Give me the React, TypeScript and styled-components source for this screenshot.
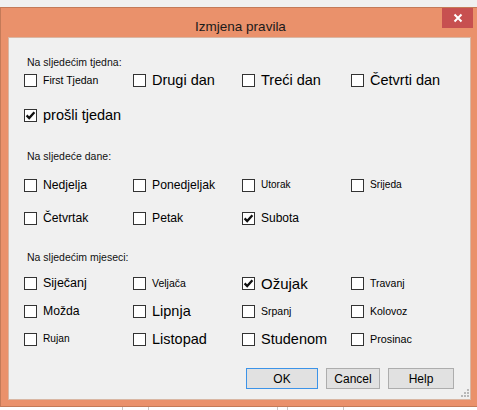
import React from "react";
import styled, { createGlobalStyle } from "styled-components";

const GlobalStyle = createGlobalStyle`
  html, body {
    margin: 0;
    padding: 0;
    background: #f0f0f0;
    overflow: hidden;
  }
  body {
    font-family: "Liberation Sans", Arial, sans-serif;
  }
`;

const Page = styled.div`
  width: 477px;
  height: 410px;
  padding-top: 7px;
  box-sizing: border-box;
  overflow: hidden;
`;

const Window = styled.div`
  width: 478px;
  background: #ea916b;
  border: 1px solid #c47a58;
  box-sizing: border-box;
  padding: 0 6px 6px 7px;
`;

const TitleBar = styled.div`
  height: 29px;
  display: flex;
  align-items: flex-start;
  justify-content: center;
  position: relative;
`;

const Title = styled.div`
  font-size: 13.5px;
  line-height: 16px;
  color: #1a1a1a;
  padding: 11px 0 0 2px;
`;

const CloseButton = styled.div`
  position: absolute;
  top: 0;
  right: -2px;
  width: 31px;
  height: 20px;
  background: #c75050;
  display: flex;
  align-items: center;
  justify-content: center;
`;

const Client = styled.div`
  width: 463px;
  height: 363px;
  background: #f0f0f0;
  box-sizing: border-box;
  border: 1px solid #d9b7a4;
  padding: 17px 0 0 15px;
  display: flex;
  flex-direction: column;
  position: relative;
`;

const Heading = styled.div<{ $gap: number }>`
  margin-top: ${(p) => p.$gap}px;
  height: 14px;
  line-height: 14px;
  font-size: 10.5px;
  color: #111;
  padding-left: 3px;
`;

const Grid = styled.div<{ $gap: number; $top: number }>`
  margin-top: ${(p) => p.$top}px;
  display: grid;
  grid-template-columns: repeat(4, 109px);
  grid-auto-rows: 20px;
  row-gap: ${(p) => p.$gap}px;
`;

const Item = styled.label`
  display: flex;
  align-items: center;
  gap: 6px;
  white-space: nowrap;
`;

const Box = styled.span`
  width: 13px;
  height: 13px;
  box-sizing: border-box;
  border: 1px solid #333;
  background: #fff;
  display: flex;
  align-items: center;
  justify-content: center;
  flex: none;
`;

const Label = styled.span<{ $size: number }>`
  font-size: ${(p) => p.$size}px;
  color: #000;
  line-height: 1;
`;

const Buttons = styled.div`
  margin-top: auto;
  margin-bottom: 10px;
  padding-right: 16px;
  display: flex;
  justify-content: flex-end;
  gap: 8px;
`;

const Button = styled.button<{ $w: number; $primary?: boolean }>`
  width: ${(p) => p.$w}px;
  height: 21px;
  padding: 0;
  border: 1px solid ${(p) => (p.$primary ? "#3c93e8" : "#adadad")};
  background: #e1e1e1;
  font-family: "Liberation Sans", Arial, sans-serif;
  font-size: 12px;
  color: #000;
`;

const Grip = styled.svg`
  position: absolute;
  right: 1px;
  bottom: 2px;
`;

const Below = styled.div`
  height: 3px;
  background: #fff;
  display: flex;
`;

const Cell = styled.div<{ $w: number }>`
  width: ${(p) => p.$w}px;
  border-right: 1px solid #c8c8c8;
  flex: none;
`;

type Opt = { text: string; size: number; checked?: boolean };

const Check = () => (
  <svg width="11" height="11" viewBox="0 0 11 11">
    <path d="M1.6 5.4 L4.2 8.1 L9.4 2.2" fill="none" stroke="#111" strokeWidth="2.3" />
  </svg>
);

const CheckItem = ({ text, size, checked }: Opt) => (
  <Item>
    <Box>{checked && <Check />}</Box>
    <Label $size={size}>{text}</Label>
  </Item>
);

const S = 10.5;
const M = 12.2;
const L = 14.5;

const weeks: Opt[] = [
  { text: "First Tjedan", size: S },
  { text: "Drugi dan", size: L },
  { text: "Treći dan", size: L },
  { text: "Četvrti dan", size: L },
  { text: "prošli tjedan", size: L, checked: true },
];

const days: Opt[] = [
  { text: "Nedjelja", size: M },
  { text: "Ponedjeljak", size: M },
  { text: "Utorak", size: 10 },
  { text: "Srijeda", size: 10.2 },
  { text: "Četvrtak", size: M },
  { text: "Petak", size: M },
  { text: "Subota", size: 12, checked: true },
];

const months: Opt[] = [
  { text: "Siječanj", size: 12.5 },
  { text: "Veljača", size: S },
  { text: "Ožujak", size: 15, checked: true },
  { text: "Travanj", size: S },
  { text: "Možda", size: M },
  { text: "Lipnja", size: L },
  { text: "Srpanj", size: S },
  { text: "Kolovoz", size: S },
  { text: "Rujan", size: 10.2 },
  { text: "Listopad", size: L },
  { text: "Studenom", size: L },
  { text: "Prosinac", size: 10.8 },
];

export default function App() {
  return (
    <>
      <GlobalStyle />
      <Page>
        <Window>
          <TitleBar>
            <Title>Izmjena pravila</Title>
            <CloseButton>
              <svg width="10" height="10" viewBox="0 0 10 10">
                <path d="M1.5 1.5 L8.5 8.5 M8.5 1.5 L1.5 8.5" stroke="#fff" strokeWidth="2" />
              </svg>
            </CloseButton>
          </TitleBar>
          <Client>
            <Heading $gap={0}>Na sljedećim tjedna:</Heading>
            <Grid $top={1} $gap={15}>
              {weeks.map((o) => (
                <CheckItem key={o.text} {...o} />
              ))}
            </Grid>
            <Heading $gap={24}>Na sljedeće dane:</Heading>
            <Grid $top={12} $gap={13}>
              {days.map((o) => (
                <CheckItem key={o.text} {...o} />
              ))}
            </Grid>
            <Heading $gap={22}>Na sljedećim mjeseci:</Heading>
            <Grid $top={9} $gap={8}>
              {months.map((o) => (
                <CheckItem key={o.text} {...o} />
              ))}
            </Grid>
            <Buttons>
              <Button $w={72} $primary>OK</Button>
              <Button $w={54}>Cancel</Button>
              <Button $w={66}>Help</Button>
            </Buttons>
            <Grip width="10" height="10" viewBox="0 0 10 10">
              {[
                [8, 2],
                [8, 5],
                [8, 8],
                [5, 5],
                [5, 8],
                [2, 8],
              ].map(([x, y]) => (
                <rect key={`${x}-${y}`} x={x} y={y} width="2" height="2" fill="#b8b8b8" />
              ))}
            </Grip>
          </Client>
        </Window>
        <Below>
          <Cell $w={122} />
          <Cell $w={25} />
          <Cell $w={128} />
          <Cell $w={9} />
          <Cell $w={55} />
        </Below>
      </Page>
    </>
  );
}
